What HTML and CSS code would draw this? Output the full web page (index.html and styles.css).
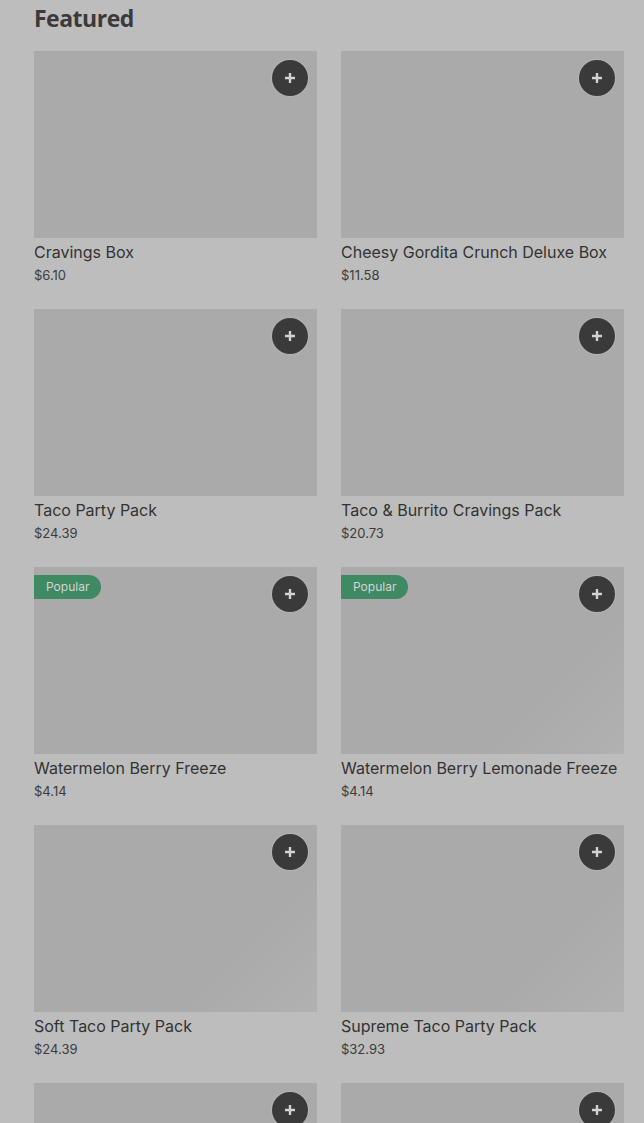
FILE: index.html
```html
<!DOCTYPE html>
<html>
<head>
<meta charset="utf-8">
<link rel="stylesheet" href="styles.css">
</head>
<body>
<main class="page">
  <h1 class="heading">Featured</h1>
  <div class="grid">
    <div class="card"><div class="thumb"><button class="add"><svg viewBox="0 0 12 12" width="12" height="12"><path d="M6 1v10M1 6h10"/></svg></button></div><div class="name">Cravings Box</div><div class="price">$6.10</div></div>
    <div class="card"><div class="thumb"><button class="add"><svg viewBox="0 0 12 12" width="12" height="12"><path d="M6 1v10M1 6h10"/></svg></button></div><div class="name">Cheesy Gordita Crunch Deluxe Box</div><div class="price">$11.58</div></div>
    <div class="card"><div class="thumb"><button class="add"><svg viewBox="0 0 12 12" width="12" height="12"><path d="M6 1v10M1 6h10"/></svg></button></div><div class="name">Taco Party Pack</div><div class="price">$24.39</div></div>
    <div class="card"><div class="thumb"><button class="add"><svg viewBox="0 0 12 12" width="12" height="12"><path d="M6 1v10M1 6h10"/></svg></button></div><div class="name">Taco &amp; Burrito Cravings Pack</div><div class="price">$20.73</div></div>
    <div class="card"><div class="thumb"><span class="badge">Popular</span><button class="add"><svg viewBox="0 0 12 12" width="12" height="12"><path d="M6 1v10M1 6h10"/></svg></button></div><div class="name">Watermelon Berry Freeze</div><div class="price">$4.14</div></div>
    <div class="card"><div class="thumb shine"><span class="badge">Popular</span><button class="add"><svg viewBox="0 0 12 12" width="12" height="12"><path d="M6 1v10M1 6h10"/></svg></button></div><div class="name">Watermelon Berry Lemonade Freeze</div><div class="price">$4.14</div></div>
    <div class="card"><div class="thumb shine"><button class="add"><svg viewBox="0 0 12 12" width="12" height="12"><path d="M6 1v10M1 6h10"/></svg></button></div><div class="name">Soft Taco Party Pack</div><div class="price">$24.39</div></div>
    <div class="card"><div class="thumb shine"><button class="add"><svg viewBox="0 0 12 12" width="12" height="12"><path d="M6 1v10M1 6h10"/></svg></button></div><div class="name">Supreme Taco Party Pack</div><div class="price">$32.93</div></div>
    <div class="card"><div class="thumb"><button class="add"><svg viewBox="0 0 12 12" width="12" height="12"><path d="M6 1v10M1 6h10"/></svg></button></div></div>
    <div class="card"><div class="thumb"><button class="add"><svg viewBox="0 0 12 12" width="12" height="12"><path d="M6 1v10M1 6h10"/></svg></button></div></div>
  </div>
</main>
</body>
</html>
```
FILE: styles.css
```css
html, body {
  margin: 0;
  padding: 0;
  background: #bdbdbd;
  overflow: hidden;
}
.page {
  padding: 0 20px 0 34px;
  font-family: Inter, "Noto Sans", sans-serif;
  color: #333333;
}
.heading {
  margin: 0;
  padding-top: 2px;
  font-family: "Open Sans", sans-serif;
  font-size: 23px;
  font-weight: 700;
  letter-spacing: -0.5px;
  line-height: 32px;
  color: #3a3a3a;
}
.grid {
  display: grid;
  grid-template-columns: 283px 283px;
  column-gap: 24px;
  row-gap: 25px;
  margin-top: 17px;
}
.card {
  display: flex;
  flex-direction: column;
}
.thumb {
  position: relative;
  height: 187px;
  background: #aaaaaa;
}
.thumb.shine {
  background: linear-gradient(135deg, #aaaaaa 0%, #aaaaaa 70%, #b1b1b1 100%);
}
.add {
  position: absolute;
  top: 9px;
  right: 9px;
  width: 36px;
  height: 36px;
  border: none;
  border-radius: 50%;
  background: #3a3a3a;
  padding: 0;
  display: flex;
  align-items: center;
  justify-content: center;
  box-shadow: 0 0 0 1px rgba(200,200,200,0.35);
}
.add svg path {
  stroke: #d2d2d2;
  stroke-width: 2.4;
  fill: none;
}
.badge {
  position: absolute;
  top: 8px;
  left: 0;
  height: 24px;
  padding: 0 12px;
  background: #3f8963;
  color: #d4d4d4;
  font-size: 12px;
  line-height: 24px;
  border-radius: 0 12px 12px 0;
}
.name {
  margin-top: 3px;
  font-size: 16px;
  font-weight: 400;
  line-height: 22px;
  color: #333333;
}
.price {
  font-size: 13px;
  line-height: 18px;
  color: #3c3c3c;
  margin-top: 3px;
}
```
